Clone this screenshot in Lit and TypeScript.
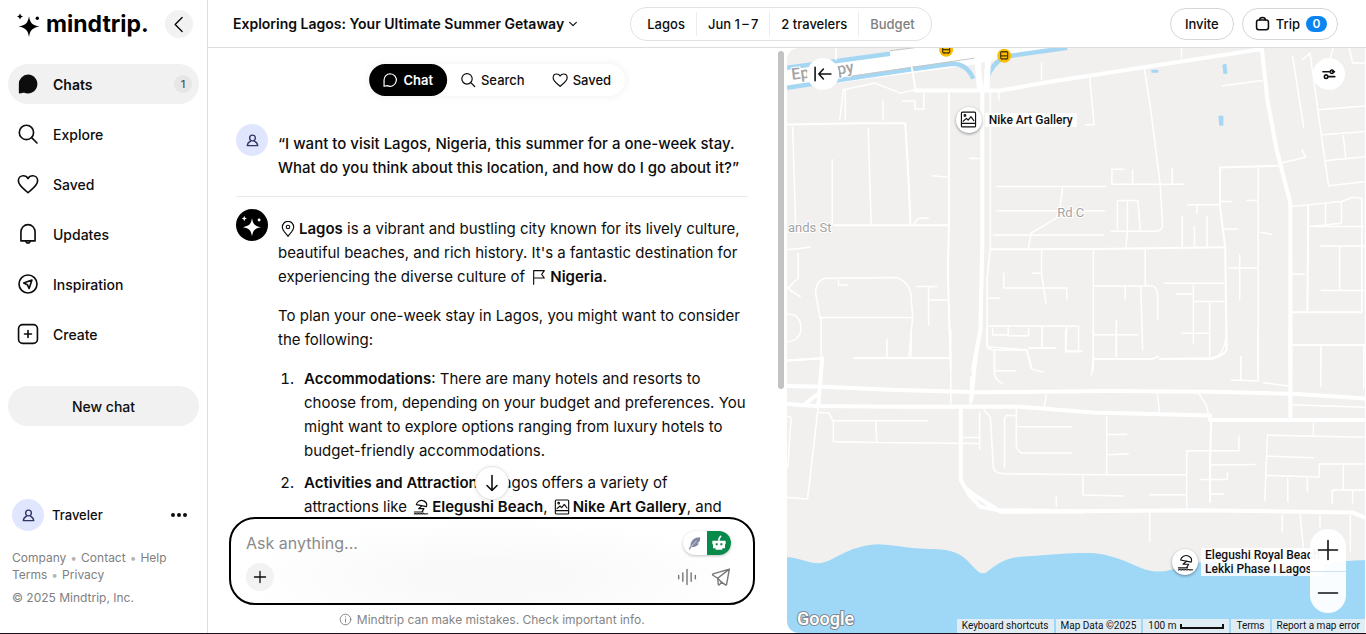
import { LitElement, html, css, svg, nothing } from "lit";
import { customElement, state } from "lit/decorators.js";
import { classMap } from "lit/directives/class-map.js";

const icon = (size: number, body: unknown, width = 1.6, box = 24) => html`<svg
  width=${size} height=${size} viewBox="0 0 ${box} ${box}" fill="none" stroke="currentColor"
  stroke-width=${width} stroke-linecap="round" stroke-linejoin="round" aria-hidden="true">${body}</svg>`;

const glyph = {
  sparkle: svg`<g fill="currentColor" stroke="none"><path d="M14 6.2C15.300 13.200 17 15 24.500 16.500C17 18 15.300 20 14 27C12.700 20 11 18 3.500 16.500C11 15 12.700 13.200 14 6.200Z"/><path d="M5 3.600Q5.400 6 8 6.500Q5.400 7 5 9.500Q4.600 7 2 6.500Q4.600 6 5 3.600Z"/><circle cx="22.300" cy="8.200" r="1.700"/></g>`,
  bubble: svg`<path d="M12 2.600a9.400 9.400 0 1 1-4.300 17.800L2.900 21.400V12A9.300 9.300 0 0 1 12 2.600Z"/>`,
  search: svg`<circle cx="10.300" cy="10.300" r="7.800"/><path d="m16 16 5.800 5.800"/>`,
  heart: svg`<path d="M12 21.500C9.500 19 1.500 14 1.500 8.500 1.500 5.300 3.900 3 6.800 3c2.300 0 4.200 1.200 5.200 3.100C13 4.200 14.900 3 17.200 3c2.900 0 5.300 2.300 5.300 5.500C22.500 14 14.500 19 12 21.500Z"/>`,
  bell: svg`<path d="M4.300 19.500V9.500a7.700 7.700 0 0 1 15.400 0v10Z"/><path d="M9.600 20c.4 2.600 4.400 2.600 4.800 0"/>`,
  compass: svg`<circle cx="12" cy="12" r="9.800"/><path d="m16.300 7.700-9 3.200 4 1.900 1.900 4Z"/>`,
  create: svg`<rect x="1.700" y="1.700" width="20.600" height="20.600" rx="4.500"/><path d="M12 8.200v7.600M8.200 12h7.600"/>`,
  person: svg`<circle cx="12" cy="8" r="4.600"/><path d="M8.600 13.300C5.700 14.400 4 16.600 3.700 20.200h16.600c-.3-3.600-2-5.800-4.900-6.900"/>`,
  chevronLeft: svg`<path d="m15 4-8 8 8 8"/>`,
  chevronDown: svg`<path d="m4 8 8 8 8-8"/>`,
  bag: svg`<rect x="2.500" y="6.500" width="19" height="15.500" rx="3.500"/><path d="M7.500 6.200C7.500 3.500 8.500 2.500 12 2.500s4.500 1 4.500 3.700"/>`,
  pin: svg`<path d="M12 23C9 18.500 3.500 14.500 3.500 9a8.500 8.500 0 0 1 17 0c0 5.500-5.500 9.500-8.500 14Z"/><circle cx="12" cy="9" r="2.600"/>`,
  flag: svg`<path d="M4 23V2.500H20l-4 5.500 4 5.500H4"/>`,
  umbrella: svg`<path d="M5 8.500C6 3.500 11.500.8 16 2.800c3.800 1.700 5.500 5 4 8.700L5 8.500ZM13.500 10.200l-5 4.300h8l-2.500 4M2 19.500h13M2 22.500c1.500-1 2.500-1 4 0 1.500-1 2.500-1 4 0 1.500-1 2.500-1 4 0 1.500-1 2.500-1 4 0l4-.3"/>`,
  picture: svg`<rect x="2" y="1.500" width="20" height="21" rx="1.500"/><path d="M2.500 17.500h19M4.500 14.500l4.500-4 2.500 2.500 4-5 4 5.500"/><circle cx="7" cy="6.300" r="1.200"/>`,
  down: svg`<path d="M12 3v18M6 15l6 6 6-6"/>`,
  plus: svg`<path d="M12 2.500v19M2.500 12h19"/>`,
  minus: svg`<path d="M2.500 12h19"/>`,
  voice: svg`<path d="M2 10v4M7 7v10M12 3v18M17 7v10M22 10v4"/>`,
  send: svg`<path d="M22 2.500 2.500 8.200c-.8.300-.9 1.300-.2 1.700L8 13.500 22 2.500ZM8 13.500l.8 7.300c.1.800 1 1 1.500.4l2.400-3 4.500 3.300c.6.400 1.300.1 1.500-.6L22 2.500"/><path d="m8 13.500 4.700 4.700"/>`,
  info: svg`<circle cx="12" cy="12" r="9.800"/><path d="M12 11v6M12 7v.5"/>`,
  feather: svg`<path fill="currentColor" stroke="none" d="M21 2C12 2 6 7 5.500 15.500L3 21l1 1 3.500-4.500C15 17.500 18.500 14 19 11.500l-3 .3 4-3C20.800 6.800 21.200 4 21 2Z"/><path stroke="#fff" stroke-width="1" d="M6.500 17 15 8"/>`,
  robot: svg`<path fill="currentColor" stroke="none" fill-rule="evenodd" d="M2 8.500h20v5.500h-1v6H17v2H7v-2H3v-6H2ZM7 12.500v3h3v-3ZM14 12.500v3h3v-3Z"/><path stroke-width="2.500" d="M12 8V5.500L14.500 2"/>`,
  collapse: svg`<path d="M2.500 4v16M21.500 12H7M12.500 6 7 12l5.500 6"/>`,
  sliders: svg`<path d="M1.500 8h11M17.500 8h4M11 16.500h11"/><circle cx="17" cy="8" r="3"/><circle cx="7" cy="16.500" r="3"/>`,
  bus: svg`<rect x="5" y="4" width="14" height="14" rx="2"/><path d="M5 12h14M8 18v2M16 18v2"/>`,
};

const reset = css`
  * { box-sizing: border-box; }
  button { font: inherit; color: inherit; background: none; border: 0; padding: 0; margin: 0; cursor: pointer; }
  a { color: inherit; text-decoration: none; }
  svg { display: block; flex: none; }
`;

interface Place { label: string[]; art: unknown; left: number; top: number; }

@customElement("trip-map")
class TripMap extends LitElement {
  static styles = [reset, css`
    :host { display: block; position: relative; overflow: hidden; background: #f1f0ef; border-radius: 12px 0 0 12px; font-family: Roboto, sans-serif; color: #111; }
    .canvas { position: absolute; inset: 0; width: 100%; height: 100%; }
    .roads path { fill: none; stroke: #fff; stroke-linejoin: round; stroke-linecap: round; vector-effect: non-scaling-stroke; }
    .roads .thin { stroke-width: 1.500px; }
    .roads .mid { stroke-width: 2px; }
    .roads .wide { stroke-width: 4px; }
    .street { fill: #a3a3a3; stroke: #fff; stroke-width: 2px; paint-order: stroke; font-size: 13px; }
    .express { font-size: 16px; font-weight: 500; }
    .brand { fill: #fff; stroke: #7f8a93; stroke-width: 2px; paint-order: stroke; font: 500 18px Roboto, sans-serif; }
    .place { position: absolute; display: flex; align-items: center; gap: 3px; transform: translateY(-50%); margin-left: -13px; font-size: 12px; font-weight: 500; line-height: 14px; white-space: nowrap; }
    .disc { display: grid; place-items: center; width: 26px; height: 26px; border-radius: 50%; background: #fff; box-shadow: 0 1px 3px rgba(0, 0, 0, .4); }
    .tag { background: rgba(255, 255, 255, .85); padding: 0 4px; }
    .control { position: absolute; display: grid; place-items: center; border-radius: 50%; background: #fff; top: 10px; width: 32px; height: 32px; }
    .collapse { left: 20px; }
    .filter { right: 20px; }
    .zoom { position: absolute; right: 19px; bottom: 20px; width: 36px; border-radius: 18px; overflow: hidden; background: rgba(255, 255, 255, .95); }
    .zoom button { display: grid; place-items: center; width: 36px; height: 42px; }
    .zoom button + button { border-top: 1px solid #cfe3ee; }
    .legal { position: absolute; right: 0; bottom: 0; display: flex; gap: 2px; font-size: 10px; line-height: 14px; white-space: nowrap; }
    .legal > * { display: flex; align-items: center; padding: 0 5px; background: rgba(235, 241, 245, .85); }
    .legal .scale { gap: 4px; }
    .bar { width: 44px; height: 5px; border: 2px solid #111; border-top: 0; }
  `];

  private places: Place[] = [
    { label: ["Nike Art Gallery"], art: glyph.picture, left: 31.500, top: 12.300 },
    { label: ["Elegushi Royal Beach", "Lekki Phase I Lagos"], art: glyph.umbrella, left: 68.900, top: 87.900 },
  ];

  private northRoads = svg`
    <path class="wide" d="M350 152H580L700 128 1285 28M1285 28 1300 180 1325 330 1362 490V990"/>
    <path class="wide" d="M512 62 530 150V620L525 870 505 990"/>
    <path class="mid" d="M545 62 538 150M440 155V555L437 700 445 990M130 556H440M340 85 350 150M0 962 98 955 95 990M552 628 830 627 1185 622M0 254 200 250H322L330 400 336 550"/>
    <path class="mid" d="M1368 817H1555M1410 500V560L1408 810M1172 383V500L1186 622 1190 930Q1180 950 1150 954L1010 957M1172 383 1330 378"/>
    <path class="thin" d="M145 240 155 150 240 130 310 160 350 150M160 150V240M262 182V240M315 184H348V208H372V160M18 262 26 550M125 360V552M222 265 230 552M345 552 358 535H385M396 408 436 412M495 356H523M552 155V620L543 720V920L650 930 662 985M690 70V118M820 112 832 255H808M968 88 985 210 1010 430 1017 560Q1012 574 1000 574H878M575 155V180"/>
    <path class="thin" d="M570 440H864M747 445 740 500 730 535 662 580 655 622M560 585H858M570 513H860M880 433H1075M880 432V388H912M936 390V430M1043 385V430M895 570V482H950L957 570M922 485V570L918 622M1085 495H1172M1110 495V522M1070 530V620M1103 560V620M1137 530V620M1175 485H1204M1185 567H1220"/>
    <path class="thin" d="M1415 40 1395 60M1368 50 1398 262M1415 40 1445 280 1465 438 1568 425M1438 210 1568 198M1450 285 1568 275M1505 288 1512 358M1455 363 1568 350M1180 138 1285 122M1335 370 1404 352 1393 330M1520 20 1530 70H1568M1068 22V55M135 22V60M1478 22 1470 55"/>
    <path class="thin" d="M1275 385V990M1245 482H1270M1282 577 1312 584M1368 500 1500 485 1530 472 1555 475V815M1500 488V550L1415 560M1457 492V555M1415 560H1560M1445 618H1568M1495 620V750M1445 752H1568M1368 703H1400M1195 684H1270M1225 645V780M1228 950V990"/>
    <path class="thin" d="M690 630V700L702 790M588 700V744H758V778M665 700H690M545 775H578M545 858H790V935H755L758 862M558 865V885H600V860M600 887H655V865M692 862V925M655 925H728M830 630V990M830 738H990Q1003 740 1004 770V838M970 625V735M916 740V778M958 740 963 928M830 884H950M892 840V948M830 957H990L1005 950M1022 730H1185M1100 735V910M1055 762H1100V785H1185M1144 790V950M1068 880H1142M563 930V990"/>
    <path class="thin" d="M0 630 65 622M33 640V715L5 745 38 770M0 740 15 755M0 822Q38 820 40 860T5 905M92 835 80 760Q82 717 110 715L300 713Q330 725 337 760L342 830 332 950M92 833H340M95 835V955M142 720V735H165M352 740H408M385 742V855M388 780H437M272 900V952M182 954H445M1370 914H1568M1444 916V990M1560 916V990"/>`;

  private southRoads = svg`
    <path class="wide" d="M0 168 100 170 300 180 530 187 870 183 1150 185 1380 192 1568 206M0 222 80 228 300 230 630 230 830 247 1145 256V270H1568M98 85 87 228M55 218 82 195M500 210 512 80 525 0M472 235V450L495 495 525 530 570 540 790 543 1100 540 1530 547 1568 565"/>
    <path class="wide" d="M490 478 515 500 580 545 800 544M1362 0V265"/>
    <path class="mid" d="M0 92 98 85M500 140 498 225M1148 275 1145 400V515"/>
    <path class="thin" d="M445 0V222M87 232 58 507 0 502M0 258 14 262 5 410M90 248H115L128 275V335L245 337 520 340M128 272H383M242 275 245 335M523 245V358M478 322H522M535 240 552 262 560 415Q565 430 590 431L865 434H1082M590 412V265L595 256H618M622 235V350Q628 368 640 369H772M625 290H772M866 260V434M870 313H920M870 374 925 371M802 436V495L912 498M982 494H1082M1082 535V362H1223V318M730 500V528M982 548V635M703 195 697 232M1003 190 1008 243M1115 190 1135 225 1140 250"/>
    <path class="thin" d="M830 0V85L825 135M830 86H990L1005 80M1010 88H1150Q1188 75 1190 0M563 60V130Q565 150 585 160M563 122H620M543 0V50Q545 60 570 60H650L665 118 695 126M655 55H728M692 0V50M755 0V63H800M892 0V80M182 85H445M272 30V82M338 0V82M1228 80V150M1202 150 1275 153V0M1290 158 1355 168M1368 45H1568M1444 48V170M1560 48V175M1370 224 1568 232"/>
    <path class="thin" d="M1424 280V315M1293 510 1300 315 1568 322M1298 378 1424 383M1296 436 1440 441V402H1568M1505 405V480M1475 520V480H1568M1530 482V520M1145 405 1268 403M1120 448H1192V428M1145 492H1180M1355 445V515M1408 445V485M1340 555V605M1388 552 1397 650M1442 555V590M1524 555V665"/>`;

  render() {
    return html`
      <svg class="canvas" viewBox="0 0 578 585" preserveAspectRatio="xMidYMid slice" role="img" aria-label="Map of Lagos">
        <path fill="#fff" d="M0 18 160-4H290L180 18 0 42Z"/>
        <g fill="none" stroke="#a5d6f2" stroke-width="4.500">
          <path d="M0 20 103 6M0 40 121 22 165 16Q180 16 186 31M200 31Q203 18 217 9L280 0"/>
        </g>
        <path fill="none" stroke="#c4c8ca" d="M103 3 150-3M60 29 190 10"/>
        <path stroke="#fff" stroke-width="6" d="M190 8 193 44M201 12 199 44"/>
        <g class="roads" transform="matrix(.37 0 0 .3333 -1 -8)">${this.northRoads}</g>
        <g class="roads" transform="matrix(.37 0 0 .3333 -1 282)">${this.southRoads}</g>
        <path fill="#a5d6f2" d="M364 22h7v3h-7ZM435 17l4-1 1 10h-4ZM431 68h5v10h-4Z"/>
        <path fill="#9fd8f7" d="M0 509C12 509 20 515 31 515C48 514 57 498 91 496C112 497 125 501 150 501C177 502 181 515 192 524Q197 527 202 522C214 513 220 509 240 508C270 506 290 504 308 505C338 509 350 521 366 523C385 525 395 515 415 514C455 511 475 523 510 520C540 516 550 512 578 512V585H0Z"/>
        <g class="street">
          <text class="express" transform="translate(5 32) rotate(-7)">Ep</text>
          <text class="express" transform="translate(51 27) rotate(-10)">py</text>
          <text x="270" y="169">Rd C</text>
          <text x="1" y="184">ands St</text>
        </g>
        <text class="brand" x="10" y="577">Google</text>
        <g transform="translate(153 -4)"><circle cx="6" cy="6" r="7" fill="#fbbc04"/><g transform="scale(.5)" stroke="#4b3a00" stroke-width="2.500" fill="none">${glyph.bus}</g></g>
        <g transform="translate(211 2)"><circle cx="6" cy="6" r="7" fill="#fbbc04"/><g transform="scale(.5)" stroke="#4b3a00" stroke-width="2.500" fill="none">${glyph.bus}</g></g>
      </svg>
      ${this.places.map((p) => html`
        <a class="place" href="#" style="left:${p.left}%;top:${p.top}%">
          <span class="disc">${icon(17, p.art, 1.6)}</span>
          <span class="tag">${p.label.map((line) => html`<div>${line}</div>`)}</span>
        </a>`)}
      <button class="control collapse" aria-label="Collapse map">${icon(20, glyph.collapse, 1.9)}</button>
      <button class="control filter" aria-label="Map filters">${icon(14, glyph.sliders, 2.6)}</button>
      <div class="zoom">
        <button aria-label="Zoom in">${icon(24, glyph.plus, 1.6)}</button>
        <button aria-label="Zoom out">${icon(24, glyph.minus, 1.6)}</button>
      </div>
      <div class="legal">
        <button>Keyboard shortcuts</button><span>Map Data ©2025</span>
        <span class="scale">100 m <span class="bar"></span></span>
        <a href="#">Terms</a><a href="#">Report a map error</a>
      </div>`;
  }
}

@customElement("app-root")
class AppRoot extends LitElement {
  static styles = [reset, css`
    :host { display: grid; box-sizing: border-box; grid-template: minmax(0, 1fr) / 208px minmax(0, 1fr); height: 100vh; border-bottom: 1px solid #1c0d16; background: #fff; color: #0d0d0d; font-family: Inter, sans-serif; font-size: 15px; overflow: hidden; }
    .side { display: flex; flex-direction: column; border-right: 1px solid #dedede; padding: 8px 8px 27px; }
    .brand { display: flex; align-items: center; justify-content: space-between; height: 32px; padding: 0 6px 0 7px; color: #000; }
    .logo { display: flex; align-items: center; gap: 3px; font-size: 23px; font-weight: 700; line-height: 32px; }
    .round { display: grid; place-items: center; width: 28px; height: 28px; border-radius: 50%; background: #f2f2f2; }
    nav { display: flex; flex-direction: column; gap: 10px; margin-top: 24px; }
    .item { display: flex; align-items: center; gap: 14px; height: 40px; padding: 0 7px 0 9px; border-radius: 20px; font-size: 14px; font-weight: 500; }
    .item.on { background: #f1f1f1; font-weight: 600; }
    .item .name { flex: 1; }
    .item.on svg { fill: currentColor; }
    .count { display: grid; place-items: center; width: 18px; height: 18px; border-radius: 9px; background: #e6e6e6; color: #555; font-size: 11px; font-weight: 500; }
    .new { height: 40px; margin-top: 32px; border-radius: 20px; background: #f1f1f1; font-size: 14px; font-weight: 500; }
    .account { display: flex; align-items: center; gap: 8px; margin-top: auto; padding: 0 12px 0 4px; font-size: 13px; font-weight: 500; }
    .account .name { flex: 1; }
    .avatar { display: grid; place-items: center; flex: none; width: 32px; height: 32px; border-radius: 50%; background: #e0e6fd; color: #2f3763; }
    .avatar.bot { background: #000; color: #fff; }
    .links { margin-top: 18px; padding-left: 4px; color: #808080; font-size: 12px; line-height: 17px; }
    .links i { color: #b5b5b5; font-style: normal; padding: 0 4px; }
    .links p { margin: 6px 0 0; }
    .main { display: grid; grid-template-rows: 48px minmax(0, 1fr); min-width: 0; }
    .top { display: grid; grid-template-columns: 1fr auto 1fr; align-items: center; border-bottom: 1px solid #dedede; padding: 0 28px 0 16px; font-size: 13px; font-weight: 500; white-space: nowrap; }
    .title { justify-self: start; display: flex; align-items: center; gap: 4px; padding: 0 9px; font-size: 14px; font-weight: 600; }
    .facts { display: flex; align-items: center; height: 34px; border: 1px solid #e2e2e2; border-radius: 17px; padding: 0 5px; }
    .facts button { height: 24px; padding: 0 11px; }
    .facts button + button { border-left: 1px solid #ececec; }
    .facts .empty { color: #808080; }
    .actions { justify-self: end; display: flex; gap: 8px; }
    .pill { display: flex; align-items: center; gap: 6px; height: 32px; border: 1px solid #d6d6d6; border-radius: 16px; padding: 0 10px 0 12px; }
    .pill.plain { padding: 0 14px; }
    .pill b { width: 21px; height: 16px; border-radius: 8px; background: #0a84f0; color: #fff; font-size: 12px; font-weight: 600; line-height: 16px; }
    .panes { display: grid; grid-template: minmax(0, 1fr) / minmax(0, 1fr) minmax(0, 1fr); padding-right: 1px; min-height: 0; }
    .chat { position: relative; display: grid; grid-template: minmax(0, 1fr) / minmax(0, 1fr) 11px; min-height: 0; }
    .flow { display: flex; flex-direction: column; min-height: 0; }
    .log { flex: 1; min-height: 0; overflow: hidden; padding: 76px 28px 0; line-height: 24px; }
    .turn { display: flex; gap: 10px; padding-bottom: 16px; }
    .turn .text { padding-top: 8px; min-width: 0; }
    .turn.mine { border-bottom: 1px solid #e8e8e8; font-weight: 500; }
    .turn.reply { padding-top: 12px; }
    .text p { margin: 0 0 15px; }
    .mine .text p { margin: 0; }
    .text b { font-weight: 600; }
    .text svg { display: inline-block; vertical-align: -3px; margin: 0 3px 0 2px; }
    ol { margin: 0; padding-left: 20px; }
    li { padding-left: 6px; margin-bottom: 8px; }
    .tabs { position: absolute; top: 16px; left: 50%; transform: translateX(-50%); display: flex; border-radius: 16px; background: #fff; box-shadow: 0 0 8px rgba(0, 0, 0, .07); font-size: 13px; font-weight: 500; }
    .tabs button { display: flex; align-items: center; gap: 5px; height: 32px; padding: 0 14px 0 13px; border-radius: 16px; }
    .tabs .on { background: #000; color: #fff; font-weight: 600; }
    .composer { position: relative; margin: 0 21px; border: 2px solid #000; border-radius: 26px; padding: 12px 22px 12px 15px; display: grid; gap: 8px; background: radial-gradient(ellipse at 50% 70%, #f9f9f9 20%, #fff 70%); }
    .row { display: flex; align-items: center; gap: 14px; }
    .row input { flex: 1; min-width: 0; height: 24px; border: 0; padding: 0; outline: 0; background: none; font: 16px Inter, sans-serif; }
    .row input::placeholder { color: #8a8a8a; }
    .gap { flex: 1; }
    .muted { color: #777; }
    .switch { display: flex; width: 48px; height: 24px; border-radius: 12px; overflow: hidden; background: #fff; color: #7f86a3; box-shadow: 0 1px 3px rgba(0, 0, 0, .25); }
    .switch button { display: grid; place-items: center; flex: 1; }
    .switch .go { background: #078a4a; color: #fff; }
    .jump { position: absolute; left: 50%; bottom: 100%; transform: translateX(-50%); margin-bottom: 19px; display: grid; place-items: center; width: 34px; height: 34px; border: 1px solid #e6e6e6; border-radius: 50%; background: #fff; box-shadow: 0 1px 4px rgba(0, 0, 0, .1); }
    .note { display: flex; align-items: center; justify-content: center; gap: 5px; height: 28px; color: #858585; font-size: 12px; }
    .thumb { width: 6px; height: 338px; margin: 3px 0 0 2px; border-radius: 3px; background: #c3c3c3; }
  `];

  @state() private tab = "Chat";

  private menu = [
    { name: "Chats", art: glyph.bubble, count: 1 },
    { name: "Explore", art: glyph.search },
    { name: "Saved", art: glyph.heart },
    { name: "Updates", art: glyph.bell },
    { name: "Inspiration", art: glyph.compass },
    { name: "Create", art: glyph.create },
  ];

  private tabs = [
    { name: "Chat", art: glyph.bubble },
    { name: "Search", art: glyph.search },
    { name: "Saved", art: glyph.heart },
  ];

  private sidebar() {
    return html`<aside class="side">
      <div class="brand">
        <a class="logo" href="#">${icon(28, glyph.sparkle, 1, 28)}mindtrip.</a>
        <button class="round" aria-label="Collapse sidebar">${icon(21, glyph.chevronLeft, 1.5)}</button>
      </div>
      <nav>${this.menu.map((m) => html`
        <a href="#" class=${classMap({ item: true, on: !!m.count })}>
          ${icon(22, m.art, 1.8)}<span class="name">${m.name}</span>
          ${m.count ? html`<span class="count">${m.count}</span>` : nothing}
        </a>`)}</nav>
      <button class="new">New chat</button>
      <div class="account">
        <span class="avatar">${icon(15, glyph.person, 2.2)}</span>
        <span class="name">Traveler</span>
        <button aria-label="Account menu"><svg width="16" height="6" fill="currentColor"><circle cx="2" cy="3" r="2"/><circle cx="8" cy="3" r="2"/><circle cx="14" cy="3" r="2"/></svg></button>
      </div>
      <div class="links">
        <a href="#">Company</a><i>•</i><a href="#">Contact</a><i>•</i><a href="#">Help</a><br>
        <a href="#">Terms</a><i>•</i><a href="#">Privacy</a>
        <p>© 2025 Mindtrip, Inc.</p>
      </div>
    </aside>`;
  }

  private header() {
    return html`<header class="top">
      <button class="title">Exploring Lagos: Your Ultimate Summer Getaway ${icon(10, glyph.chevronDown, 2.8)}</button>
      <div class="facts">
        <button>Lagos</button><button>Jun 1&thinsp;–&thinsp;7</button><button>2 travelers</button><button class="empty">Budget</button>
      </div>
      <div class="actions">
        <button class="pill plain">Invite</button>
        <button class="pill">${icon(15, glyph.bag, 2.5)}Trip<b>0</b></button>
      </div>
    </header>`;
  }

  private conversation() {
    return html`<div class="log">
      <div class="turn mine">
        <span class="avatar">${icon(15, glyph.person, 2.2)}</span>
        <div class="text"><p>“I want to visit Lagos, Nigeria, this summer for a one-week stay. What do you think about this location, and how do I go about it?”</p></div>
      </div>
      <div class="turn reply">
        <span class="avatar bot">${icon(24, glyph.sparkle, 1, 28)}</span>
        <div class="text">
          <p>${icon(16, glyph.pin, 1.7)}<b>Lagos</b> is a vibrant and bustling city known for its lively culture, beautiful beaches, and rich history. It's a fantastic destination for experiencing the diverse culture of ${icon(16, glyph.flag, 1.7)}<b>Nigeria.</b></p>
          <p>To plan your one-week stay in Lagos, you might want to consider the following:</p>
          <ol>
            <li><b>Accommodations</b>: There are many hotels and resorts to choose from, depending on your budget and preferences. You might want to explore options ranging from luxury hotels to budget-friendly accommodations.</li>
            <li><b>Activities and Attractions</b>: Lagos offers a variety of attractions&nbsp;like ${icon(16, glyph.umbrella, 1.7)}<b>Elegushi Beach</b>, ${icon(16, glyph.picture, 1.7)}<b>Nike Art Gallery</b>, and</li>
          </ol>
        </div>
      </div>
    </div>`;
  }

  private composer() {
    return html`<div class="composer">
        <button class="jump" aria-label="Scroll to latest">${icon(20, glyph.down, 1.9)}</button>
        <div class="row">
          <input type="text" aria-label="Message" placeholder="Ask anything...">
          <div class="switch">
            <button aria-label="Writing help">${icon(15, glyph.feather, 1)}</button>
            <button class="go" aria-label="Assistant">${icon(16, glyph.robot, 1)}</button>
          </div>
        </div>
        <div class="row">
          <button class="round" aria-label="Add">${icon(14, glyph.plus, 2.2)}</button>
          <span class="gap"></span>
          <button class="muted" aria-label="Voice">${icon(20, glyph.voice, 1.7)}</button>
          <button class="muted" aria-label="Send">${icon(20, glyph.send, 1.7)}</button>
        </div>
      </div>
      <div class="note">${icon(13, glyph.info, 1.8)}Mindtrip can make mistakes. Check important info.</div>`;
  }

  render() {
    return html`
      ${this.sidebar()}
      <div class="main">
        ${this.header()}
        <div class="panes">
          <section class="chat">
            <div class="flow">${this.conversation()}${this.composer()}</div>
            <div class="thumb"></div>
            <div class="tabs">${this.tabs.map((t) => html`
              <button class=${classMap({ on: t.name === this.tab })} @click=${() => (this.tab = t.name)}>${icon(16, t.art, 1.8)}${t.name}</button>`)}
            </div>
          </section>
          <trip-map></trip-map>
        </div>
      </div>`;
  }
}
